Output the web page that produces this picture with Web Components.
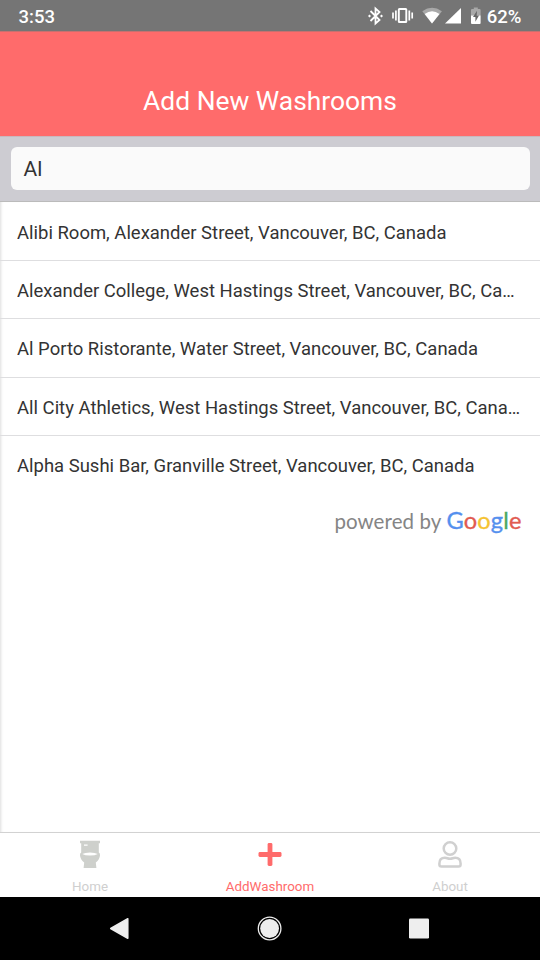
<!DOCTYPE html>
<html lang="en"><head><meta charset="utf-8"><title>Add New Washrooms</title>
<style>html,body{margin:0;height:100%;overflow:hidden}body{font-family:Roboto,sans-serif;background:#fff}</style></head>
<body><washroom-app></washroom-app>
<script>
const define=(name,html)=>customElements.define(name,class extends HTMLElement{
  constructor(){super();this.attachShadow({mode:'open'}).innerHTML=html;}
});
define('status-bar',`<style>
:host{display:flex;height:32px;background:#757575;color:#fff;align-items:center;justify-content:space-between;padding:2px 18.5px 0 18.5px;box-sizing:border-box;font-size:18.5px;font-weight:500;border-bottom:1px solid #c9706f}
div{display:flex;align-items:center}svg{display:block}
</style><span>3:53</span><div><svg width="119" height="24" viewBox="366 5 119 24">
<path d="M370.500 11l9 9-4 3.500V8.500l4 3.500-9 9" fill="none" stroke="#fff" stroke-width="1.800"/>
<path d="M368 16l1.500-1.500 1.500 1.500-1.500 1.500zM380 16l1.500-1.500 1.500 1.500-1.500 1.500z" fill="#fff"/>
<rect x="398.800" y="9" width="7.500" height="13" rx=".6" fill="none" stroke="#fff" stroke-width="1.900"/>
<path d="M395.900 10.600v9.800M393 12.600v5.800M409.300 10.600v9.800M412.200 12.600v5.800" stroke="#fff" stroke-width="1.700"/>
<path d="M422.300 11.200Q432 4.300 441.900 11.200L432 23.600z" fill="#a8a8a8"/>
<path d="M424.700 14.100Q432 8.600 439.500 14.100L432 23.600z" fill="#fff"/>
<path d="M461 8v15.500h-16z" fill="#fff"/>
<path d="M471 10q0-1 1-1h1.800V7.500h4V9h1.800q1 0 1 1v5.800H471z" fill="#a8a8a8"/>
<path d="M471 15.500h9.600V23q0 1-1 1H472q-1 0-1-1z" fill="#fff"/>
<path d="M477 10.800l-4 6.300h2.400v4.600l3.600-6.300h-2.300z" fill="#666"/></svg><span style="margin-left:2px">62%</span></div>`);
define('page-header',`<style>:host{display:flex;height:104px;box-sizing:border-box;padding-top:33px;align-items:center;justify-content:center;background:#ff6b6b;color:#fff;font-size:26.4px}</style><slot></slot>`);
define('search-field',`<style>
:host{display:block;height:66px;box-sizing:border-box;padding:10px 10.500px 12px;background:#cdccd2;border-top:1px solid #c9b8bd;border-bottom:1px solid #bbb}
div{height:43px;border-radius:6px;background:#fafafa;color:#333;font-size:21px;display:flex;align-items:center;padding:0 13px;box-sizing:border-box}
</style><div><slot></slot></div>`);
define('place-row',`<style>
:host{display:block;height:58.350px;box-sizing:border-box;padding:1px 19px 0 17px;border-bottom:1px solid #dedee0;color:#333;font-size:18.480px;line-height:58.350px}
:host(:first-of-type){height:59px;padding-top:2px}
:host(:last-of-type){border:0}
div{white-space:nowrap;overflow:hidden;text-overflow:ellipsis}
</style><div><slot></slot></div>`);
define('powered-by',`<style>
:host{display:flex;align-items:baseline;justify-content:flex-end;height:36px;line-height:36px;padding:8px 18.500px 0;color:#858585;font-family:Lato,sans-serif;font-size:20.500px;letter-spacing:.100px}
b{font-weight:400;font-size:23.600px;margin-left:5px;letter-spacing:.150px;-webkit-text-stroke:.35px}
.b{color:#5590ee}.r{color:#e15b50}.y{color:#f5c333}.g{color:#4baa61}
</style><span>powered by</span><b><span class="b">G</span><span class="r">o</span><span class="y">o</span><span class="b">g</span><span class="g">l</span><span class="r">e</span></b>`);
define('tab-item',`<style>
:host{flex:1;display:flex;flex-direction:column;align-items:center;color:#cfcfcf;font-size:13.400px;padding-top:6px}
:host([active]){color:#ff6b6b}div{height:32px}span{line-height:32px;padding-top:2px}
</style><div><slot name="icon"></slot></div><span><slot></slot></span>`);
define('tab-bar',`<style>:host{display:flex;height:65px;box-sizing:border-box;border-top:1px solid #d2d2d2;background:#fff}svg{display:block}</style>
<tab-item><svg slot="icon" width="24" height="30" viewBox="78 839 24 30"><path fill="#ced0cc" d="M80 840.800h20v2.400h-1.200v9.300q1.400.8 1.200 2.800-.3 4.200-4.200 7.300l.6 5.400H83.600l.6-5.400q-3.900-3.100-4.200-7.300-.2-2 1.200-2.800v-9.300H80z"/><path fill="#fff" d="M84 844.500h3.600v1.300H84zM82.200 853.900q2.800-1.500 7.800-1.500t7.800 1.500q-2.800 1.600-7.800 1.600t-7.800-1.600z"/></svg>Home</tab-item>
<tab-item active><svg slot="icon" width="24" height="30" viewBox="258 839 24 30"><rect x="267.600" y="843" width="4.800" height="23" rx="1.400" fill="#ff6b6b"/><rect x="258.500" y="852.100" width="23" height="4.800" rx="1.400" fill="#ff6b6b"/></svg>AddWashroom</tab-item>
<tab-item><svg slot="icon" width="26" height="30" viewBox="437 839 26 30"><g fill="none" stroke="#d0d0d0" stroke-width="2.500"><circle cx="450" cy="848.500" r="6.300"/><path d="M444.900 857.700C447.300 857.700 447.500 858.800 450 858.800S452.700 857.700 455.100 857.700Q460.600 857.700 460.600 863.400V864.500Q460.600 866.500 458.600 866.500H441.400Q439.400 866.500 439.400 864.500V863.400Q439.400 857.700 444.900 857.700z"/></g></svg>About</tab-item>`);
define('nav-bar',`<style>:host{display:block;height:63px;background:#000}svg{display:block}</style>
<svg width="540" height="63" viewBox="0 897 540 63"><path d="M110.700 928.500L127.800 918.700V938.300z" fill="#eee" stroke="#eee" stroke-width="1.500" stroke-linejoin="round"/><circle cx="269.600" cy="928.500" r="11.300" fill="none" stroke="#eee" stroke-width="1.300"/><circle cx="269.600" cy="928.500" r="9.400" fill="#eee"/><rect x="409" y="918.500" width="20" height="20" rx="1.300" fill="#eee"/></svg>`);
define('washroom-app',`<style>
:host{display:flex;flex-direction:column;width:540px;height:960px;background:#fff}
main{flex:1;min-height:0;box-shadow:inset 3px 0 3px -2px #ddd}
</style><status-bar></status-bar><page-header>Add New Washrooms</page-header><search-field>Al</search-field>
<main><place-row>Alibi Room, Alexander Street, Vancouver, BC, Canada</place-row><place-row>Alexander College, West Hastings Street, Vancouver, BC, Canada</place-row><place-row>Al Porto Ristorante, Water Street, Vancouver, BC, Canada</place-row><place-row>All City Athletics, West Hastings Street, Vancouver, BC, Canada</place-row><place-row>Alpha Sushi Bar, Granville Street, Vancouver, BC, Canada</place-row><powered-by></powered-by></main><tab-bar></tab-bar><nav-bar></nav-bar>`);
</script></body></html>
